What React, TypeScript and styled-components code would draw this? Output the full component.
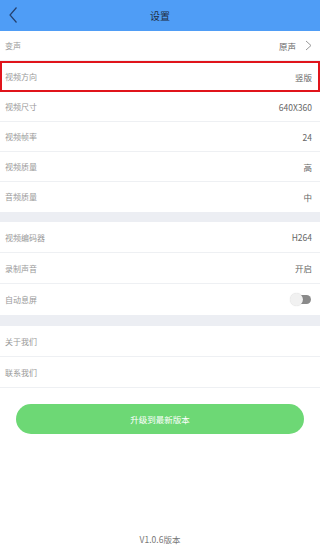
import React from "react";
import styled, { createGlobalStyle } from "styled-components";

const Global = createGlobalStyle`
  html, body { margin: 0; padding: 0; background: #fff; }
  body { font-family: "Noto Sans CJK SC", "Noto Sans", sans-serif; }
`;

const Page = styled.div`
  width: 320px;
  height: 554px;
  display: flex;
  flex-direction: column;
  background: #fff;
`;

const Header = styled.div`
  height: 31px;
  background: #4f9df6;
  display: flex;
  align-items: center;
  justify-content: center;
  position: relative;
  color: #1f2d44;
  font-size: 10px;
`;

const Back = styled.div`
  position: absolute;
  left: 7px;
  top: 6px;
  width: 14px;
  height: 18px;
`;

const Row = styled.div<{ highlight?: boolean; last?: boolean; tall?: boolean }>`
  height: ${({ highlight, tall }) => (highlight ? "27px" : tall ? "30px" : "29px")};
  display: flex;
  align-items: center;
  justify-content: space-between;
  padding: 0 ${({ highlight }) => (highlight ? "6px" : "8px")} 0 ${({ highlight }) => (highlight ? "3px" : "5px")};
  border: ${({ highlight }) => (highlight ? "2px solid #e0141b" : "none")};
  border-bottom: ${({ highlight, last }) =>
    highlight ? "2px solid #e0141b" : last ? "1px solid transparent" : "1px solid #eef0f3"};
  font-size: 8px;
`;

const Label = styled.span`
  color: #999;
`;

const Value = styled.span`
  color: #666;
  font-size: 8.5px;
  display: flex;
  align-items: center;
  gap: 9px;
  font-family: "Noto Sans CJK SC", "Roboto", sans-serif;
`;

const Gap = styled.div<{ size: number }>`
  height: ${({ size }) => size}px;
  background: #eceef3;
`;

const Toggle = styled.div`
  width: 19px;
  height: 9px;
  border-radius: 5px;
  background: #8a8a8a;
  position: relative;
  margin-right: 1px;
`;

const Knob = styled.div`
  position: absolute;
  left: -2px;
  top: -2px;
  width: 13px;
  height: 13px;
  border-radius: 50%;
  background: #f1f1f1;
  box-shadow: 0 0 1px rgba(0, 0, 0, 0.2);
`;

const ButtonWrap = styled.div`
  padding: 16px 16px 0;
`;

const Upgrade = styled.div`
  height: 30px;
  border-radius: 15px;
  background: #6dd875;
  color: #fff;
  font-size: 8.5px;
  display: flex;
  align-items: center;
  justify-content: center;
`;

const Version = styled.div`
  margin-top: auto;
  padding-bottom: 9px;
  text-align: center;
  font-size: 8.5px;
  color: #777;
`;

const Chevron = () => (
  <svg width="7" height="11" viewBox="0 0 7 11">
    <path d="M1 1 L6 5.5 L1 10" fill="none" stroke="#999" strokeWidth="1" />
  </svg>
);

export default function App() {
  return (
    <Page>
      <Global />
      <Header>
        <Back>
          <svg width="14" height="18" viewBox="0 0 14 18">
            <path d="M9.5 1.5 L3 9 L9.5 16.5" fill="none" stroke="#24406e" strokeWidth="1.2" />
          </svg>
        </Back>
        设置
      </Header>
      <Row>
        <Label>变声</Label>
        <Value>
          原声
          <Chevron />
        </Value>
      </Row>
      <Row highlight>
        <Label>视频方向</Label>
        <Value>竖版</Value>
      </Row>
      <Row>
        <Label>视频尺寸</Label>
        <Value>640X360</Value>
      </Row>
      <Row>
        <Label>视频帧率</Label>
        <Value>24</Value>
      </Row>
      <Row>
        <Label>视频质量</Label>
        <Value>高</Value>
      </Row>
      <Row last>
        <Label>音频质量</Label>
        <Value>中</Value>
      </Row>
      <Gap size={10} />
      <Row tall>
        <Label>视频编码器</Label>
        <Value>H264</Value>
      </Row>
      <Row tall>
        <Label>录制声音</Label>
        <Value>开启</Value>
      </Row>
      <Row tall last>
        <Label>自动息屏</Label>
        <Toggle>
          <Knob />
        </Toggle>
      </Row>
      <Gap size={11} />
      <Row tall>
        <Label>关于我们</Label>
      </Row>
      <Row tall>
        <Label>联系我们</Label>
      </Row>
      <ButtonWrap>
        <Upgrade>升级到最新版本</Upgrade>
      </ButtonWrap>
      <Version>V1.0.6版本</Version>
    </Page>
  );
}
